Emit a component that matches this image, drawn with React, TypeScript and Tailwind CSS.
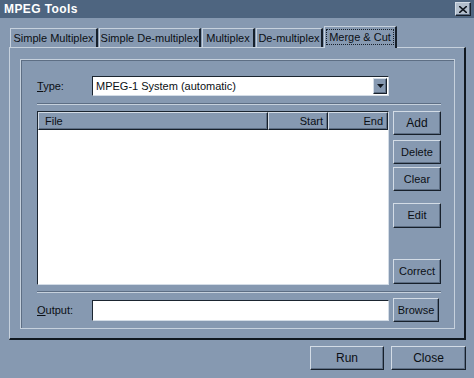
import React from 'react';

// raised 3d edge used by buttons
const raised =
  'border-t border-l border-t-[#d3dce6] border-l-[#d3dce6] border-b border-r border-b-[#17202b] border-r-[#17202b] shadow-[inset_-1px_-1px_0_#5d6e84]';
const sunken =
  'border-t border-l border-t-[#1b2530] border-l-[#1b2530] border-b border-r border-b-[#d3dce6] border-r-[#d3dce6]';

const Btn: React.FC<{ label: string; className?: string }> = ({ label, className }) => (
  <button className={`${raised} bg-[#8699b1] text-[#0b0f14] flex items-center justify-center whitespace-nowrap ${className ?? 'text-[11px]'}`}>
    {label}
  </button>
);

const tabs = [
  { label: 'Simple Multiplex', w: 'w-[88px]' },
  { label: 'Simple De-multiplex', w: 'w-[102px]' },
  { label: 'Multiplex', w: 'w-[53px]' },
  { label: 'De-multiplex', w: 'w-[67px]' },
];

const Separator = () => (
  <div className="ml-[16px] w-[404px] h-[2px] border-t border-t-[#5d6e84] border-b border-b-[#c6d1dd]" />
);

export default function App() {
  return (
    <div
      className="w-[474px] h-[378px] bg-[#8699b1] overflow-hidden text-[#0b0f14] text-[11px]"
      style={{ fontFamily: '"Liberation Sans", Arial, sans-serif' }}
    >
      {/* title bar */}
      <div className="h-[18px] bg-[#4e6580] flex items-center justify-between pl-[4px] pr-[3px]">
        <span className="text-white font-bold text-[12px] tracking-[0.4px]">MPEG Tools</span>
        <div className={`${raised} w-[16px] h-[14px] bg-[#b3bfcd] flex items-center justify-center`}>
          <svg width="8" height="7" viewBox="0 0 8 7">
            <path d="M0 0 L8 7 M8 0 L0 7" stroke="#10161e" strokeWidth="1.6" />
          </svg>
        </div>
      </div>

      {/* tab strip */}
      <div className="mt-[8px] h-[21px] pl-[10px] flex items-end gap-[1px]">
        {tabs.map((t) => (
          <div
            key={t.label}
            className={`${t.w} h-[19px] border-t border-l border-t-[#c6d1dd] border-l-[#c6d1dd] border-r-2 border-r-[#17202b] flex items-center justify-center whitespace-nowrap`}
          >
            {t.label}
          </div>
        ))}
        <div className="relative z-10 w-[73px] h-[22px] -mb-[1px] bg-[#8699b1] border-t border-l border-t-[#c6d1dd] border-l-[#c6d1dd] border-r-2 border-r-[#17202b] flex items-start justify-center pt-[2px] whitespace-nowrap">
          <span className="px-[2px] leading-[14px] border border-dotted border-[#17202b]">Merge &amp; Cut</span>
        </div>
      </div>

      {/* tab panel */}
      <div className="ml-[9px] w-[457px] h-[293px] border-t border-l border-t-[#c6d1dd] border-l-[#c6d1dd] border-r-2 border-b-2 border-r-[#101820] border-b-[#101820] pt-[11px] pl-[10px]">
        <div className="w-[435px] h-[270px] border border-[#c6d1dd] shadow-[inset_1px_1px_0_#5d6e84]">
          {/* type row */}
          <div className="mt-[16px] h-[20px] pl-[16px] flex items-center">
            <span className="w-[55px]">
              <span className="underline">T</span>ype:
            </span>
            <div className={`${sunken} w-[297px] h-[20px] bg-white flex items-center`}>
              <span className="flex-1 pl-[3px]">MPEG-1 System (automatic)</span>
              <div className={`${raised} w-[14px] h-[16px] mr-[1px] flex items-center justify-center bg-[#8699b1]`}>
                <svg width="7" height="4" viewBox="0 0 7 4">
                  <path d="M0 0 H7 L3.5 4 Z" fill="#10161e" />
                </svg>
              </div>
            </div>
          </div>

          <div className="mt-[7px]">
            <Separator />
          </div>

          {/* list + buttons */}
          <div className="mt-[6px] ml-[16px] flex gap-[4px]">
            <div className={`${sunken} w-[352px] h-[174px] bg-white flex flex-col`}>
              <div className="h-[18px] bg-[#8699b1] flex">
                <div className={`${raised} w-[230px] pl-[6px] flex items-center`}>File</div>
                <div className={`${raised} w-[60px] pr-[4px] flex items-center justify-end`}>Start</div>
                <div className={`${raised} flex-1 pr-[4px] flex items-center justify-end`}>End</div>
              </div>
            </div>
            <div className="flex flex-col w-[48px]">
              <Btn label="Add" className="h-[24px] text-[12px]" />
              <Btn label="Delete" className="h-[24px] mt-[5px] text-[11px]" />
              <Btn label="Clear" className="h-[24px] mt-[3px] text-[11px]" />
              <Btn label="Edit" className="h-[25px] mt-[12px] text-[11px]" />
              <Btn label="Correct" className="h-[25px] mt-[31px] text-[11px]" />
            </div>
          </div>

          <div className="mt-[6px]">
            <Separator />
          </div>

          {/* output row */}
          <div className="mt-[5px] h-[24px] pl-[16px] flex items-center">
            <span className="w-[55px]">
              <span className="underline">O</span>utput:
            </span>
            <div className={`${sunken} w-[297px] h-[21px] bg-white`} />
            <Btn label="Browse" className="ml-[4px] w-[46px] h-[24px] text-[11px]" />
          </div>
        </div>
      </div>

      {/* dialog buttons */}
      <div className="mt-[6px] pl-[310px] flex gap-[7px]">
        <Btn label="Run" className="w-[74px] h-[24px] text-[12px]" />
        <Btn label="Close" className="w-[75px] h-[24px] text-[12px]" />
      </div>
    </div>
  );
}
